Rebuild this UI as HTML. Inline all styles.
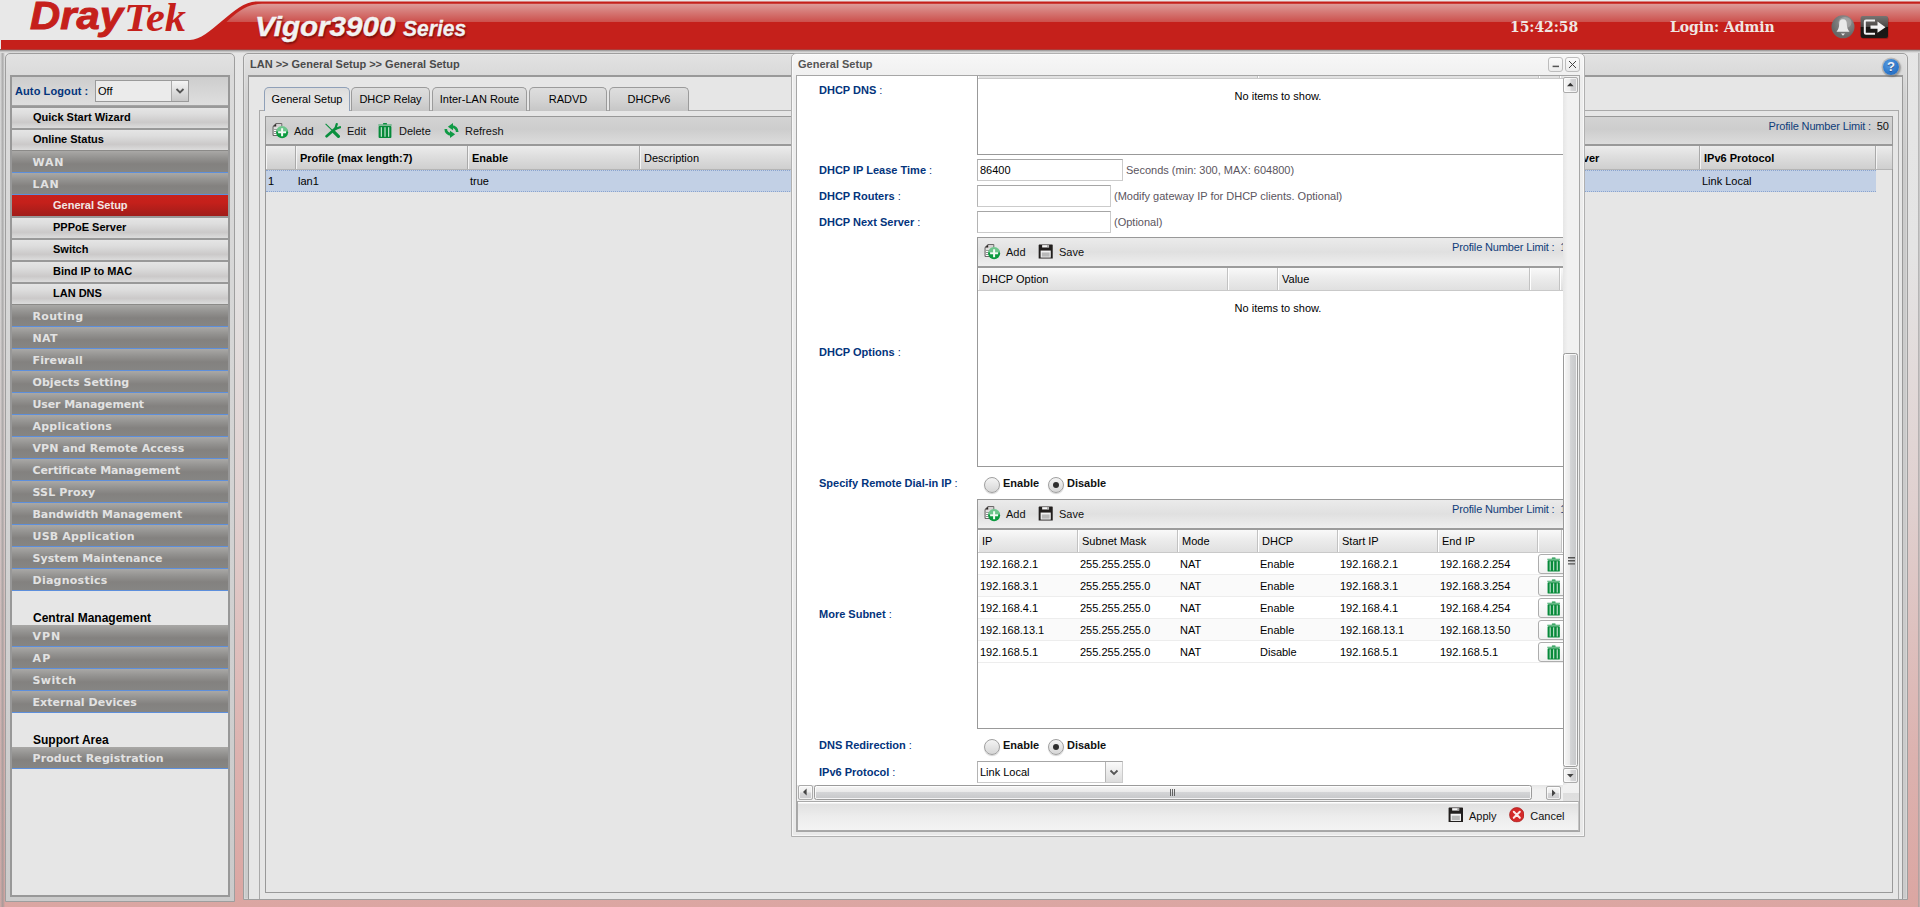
<!DOCTYPE html>
<html>
<head>
<meta charset="utf-8">
<title>Vigor3900 Series</title>
<style>
*{box-sizing:border-box;}
html,body{margin:0;padding:0;}
body{width:1920px;height:907px;overflow:hidden;position:relative;
  font-family:"Liberation Sans",Arial,sans-serif;font-size:11px;color:#000;
  background:linear-gradient(to bottom,#e6e6e6 0px,#e4e4e4 250px,#e0d0cf 507px,#dcb2af 757px,#dba6a2 907px);}
.abs{position:absolute;}
/* ---------- header ---------- */
#hdr{position:absolute;left:0;top:0;width:1920px;height:53px;}
#logo{position:absolute;left:0;top:0;color:#c5201b;white-space:nowrap;}
#logo .d{position:absolute;left:30px;top:-9px;font-family:"Liberation Sans",sans-serif;font-weight:bold;font-style:italic;font-size:39.3px;line-height:48px;
  transform-origin:0 0;transform:scaleX(1.063);-webkit-text-stroke:1px #c5201b;}
#logo .t{position:absolute;left:123.6px;top:-6.5px;font-family:"Liberation Serif",serif;font-style:italic;font-weight:bold;font-size:40px;line-height:48px;
  transform-origin:0 0;transform:scaleX(1.06);}
#model{position:absolute;left:0;top:0;font-family:"Liberation Sans",sans-serif;font-weight:bold;font-style:italic;
  color:#f2f2f2;white-space:nowrap;text-shadow:1px 2px 2px rgba(60,0,0,.55);}
#model .v{position:absolute;left:255px;top:10.2px;font-size:27.7px;line-height:34px;transform-origin:0 0;transform:scaleX(1.07);-webkit-text-stroke:.4px #f2f2f2;}
#model .s{position:absolute;left:403px;top:14.3px;font-size:21.7px;line-height:30px;transform-origin:0 0;transform:scaleX(.97);-webkit-text-stroke:.3px #f2f2f2;}
.hserif{position:absolute;font-family:"DejaVu Serif","Liberation Serif",serif;font-weight:bold;color:#efe6e2;font-size:14px;line-height:20px;white-space:nowrap;letter-spacing:-.08px;}

/* ---------- left panel ---------- */
#lstrip{position:absolute;left:0;top:53px;width:5px;height:854px;background:linear-gradient(to right,rgba(190,190,190,.2),rgba(150,150,150,.75) 55%,rgba(170,170,170,0));}
#rstrip{position:absolute;left:1918px;top:53px;width:2px;height:854px;background:linear-gradient(to right,rgba(150,150,150,.7),rgba(190,190,190,.5));}
#lp{position:absolute;left:5px;top:53px;width:230px;height:849px;border:1px solid #9e9e9e;border-radius:5px 5px 0 0;
  background:linear-gradient(to bottom,#e2e2e2 0,#dadada 22px,#dbdbdb 23px,#cbcbcb 100%);}
#lpin{position:absolute;left:10px;top:75px;width:220px;height:822px;border:2px solid #989898;background:#e6e6e6;overflow:hidden;}
#al{position:absolute;left:0;top:0;width:216px;height:29px;background:linear-gradient(#cdcdcd,#d6d6d6 50%,#dedede);border-bottom:1px solid #a4a4a4;}
#al .lb{position:absolute;left:3px;top:7px;font-weight:bold;color:#03347c;font-size:11px;line-height:14px;letter-spacing:.1px}
#al .sel{position:absolute;left:83px;top:3px;width:94px;height:22px;border:1px solid #9a9a9a;background:#ebebeb;}
#al .sel span{position:absolute;left:2px;top:4px;font-size:11px;line-height:13px;color:#000;}
#al .sel i{position:absolute;right:0;top:0;width:17px;height:20px;border-left:1px solid #aaa;background:linear-gradient(#f4f4f4,#c8c8c8);}
.mi{position:absolute;left:0;width:216px;height:22px;font-weight:bold;font-size:11px;line-height:14px;white-space:nowrap;}
.mi span{position:absolute;top:3px;}
.mw{background:linear-gradient(#e5e5e5 0,#dddddd 30%,#cbc9c9 72%,#dcdcdc 100%);border-top:2px solid #999;color:#000;height:22px;}
.mw span{left:21px;top:2px;}
.ms span{left:41px;}
.mg{background:linear-gradient(#a9a8a6 0,#92918f 35%,#83817f 62%,#868583 100%);border-bottom:1px solid #5d8fdc;color:#e2e2e2;
  font-family:"DejaVu Sans",Verdana,sans-serif;font-size:11px;}
.mg span{left:20.5px;top:5px;}
.mr{background:linear-gradient(#c8211c 0,#c5201b 35%,#a01d1a 100%);color:#f3e6e4;height:21px;}
.mr span{left:41px;top:3px;}
.mh{position:absolute;left:21px;font-weight:bold;font-size:12px;line-height:14px;color:#000;white-space:nowrap;}
/* ---------- right panel ---------- */
#rp{position:absolute;left:243px;top:53px;width:1665px;height:847px;border:1px solid #9e9e9e;border-radius:5px 5px 0 0;
  background:linear-gradient(to bottom,#e2e2e2 0,#d9d9d9 22px,#d2d2d2 40px,#cbcbcb 110px,#cbcbcb 100%);box-shadow:inset 0 0 0 1px rgba(255,255,255,.22);}
#rpt{position:absolute;left:250px;top:57px;font-weight:bold;font-size:11px;line-height:14px;color:#4a4a4a;white-space:nowrap;}
#rpin{position:absolute;left:248px;top:75px;width:1655px;height:824px;border:1px solid #999;border-top:2px solid #999;border-bottom:0;background:#e6e6e6;}
#help{position:absolute;left:1883px;top:59px;width:16px;height:16px;border-radius:8px;
  background:radial-gradient(circle at 40% 35%,#5e9fe0 0,#2f7acd 55%,#1f63b4 100%);box-shadow:0 0 0 1.5px rgba(150,150,150,.45),1px 1px 2px 1px rgba(0,0,0,.3);
  color:#eef4fb;font-weight:bold;font-size:13px;line-height:16px;text-align:center;text-shadow:0 1px 1px rgba(0,0,60,.5);}
.tab{position:absolute;top:87px;height:24px;border:1px solid #9b9b9b;border-bottom:0;border-radius:5px 5px 0 0;
  background:linear-gradient(#dedede 0,#d4d4d4 50%,#c6c6c6 100%);font-size:11px;line-height:14px;text-align:center;color:#000;white-space:nowrap;padding-top:4px;}
.tab.on{background:linear-gradient(#dcdcdc 0,#e3e3e3 40%,#e6e6e6 100%);border-color:#8fa0b8;height:24px;}
#tabline{position:absolute;left:259px;top:110px;width:1640px;height:789px;border:1px solid #a9a9a9;border-bottom:0;background:#e6e6e6;}
#grid{position:absolute;left:265px;top:116px;width:1628px;height:777px;border:1px solid #999;background:#e6e6e6;}
.tb{position:absolute;left:0;top:0;width:100%;height:29px;background:linear-gradient(#d3d3d3 0,#cdcdcd 45%,#dcdcdc 100%);border-bottom:2px solid #999;}
.tbi{position:absolute;top:7px;font-size:11px;line-height:14px;color:#111;white-space:nowrap;}
.pnl{position:absolute;top:3px;font-size:11px;line-height:14px;color:#0f3d7a;white-space:nowrap;}
.gh{position:absolute;left:0;top:29px;width:100%;height:24px;background:linear-gradient(#ececec 0,#dedede 45%,#cfcfcf 100%);border-bottom:1px solid #b5b5b5;}
.ghc{position:absolute;top:0;height:23px;border-left:1px solid #f4f4f4;border-right:1px solid #a9a9a9;font-size:11px;line-height:14px;padding:5px 0 0 4px;white-space:nowrap;overflow:hidden;color:#000;}
.ghc.b{font-weight:bold;}
.grow{position:absolute;left:0;height:22px;font-size:11px;line-height:14px;}
.grow.sel{background:#c2d0e5;border-top:1px dotted #8aa4cf;border-bottom:1px dotted #8aa4cf;}
.gc{position:absolute;top:3px;white-space:nowrap;color:#000;}

/* ---------- dialog ---------- */
#dlgsh{position:absolute;left:791px;top:57px;width:794px;height:780px;box-shadow:0 0 6px 1px rgba(0,0,0,.45);border-radius:5px;}
#dlg{position:absolute;left:791px;top:53px;width:794px;height:784px;border:1px solid #b0b0b0;border-radius:5px 5px 0 0;
  background:linear-gradient(#f7f7f7 0,#f0f0f0 22px,#ededed 23px,#e9e9e9 100%);box-shadow:inset 0 0 0 1px rgba(255,255,255,.6);}
#dlgt{position:absolute;left:798px;top:57px;font-weight:bold;font-size:11px;line-height:14px;color:#555;white-space:nowrap;}
.tool{position:absolute;top:57px;width:15px;height:15px;border:1px solid #bdbdbd;border-radius:3px;background:linear-gradient(#fafafa,#ececec);}
#dbody{position:absolute;left:796px;top:75px;width:784px;height:757px;border:1px solid #a6a6a6;background:#fff;overflow:hidden;}
#dsc{position:absolute;left:0;top:0;width:766px;height:709px;overflow:hidden;background:#fff;}
.fl{position:absolute;left:22px;font-weight:bold;font-size:11px;line-height:14px;color:#03347c;white-space:nowrap;}
.fl b{font-weight:normal}
.inp{position:absolute;left:180px;height:22px;border:1px solid #cbcbcb;border-top-color:#a6a6a6;border-left-color:#b4b4b4;background:#fff;font-size:11px;line-height:14px;padding:3px 0 0 2px;color:#000;}
.hint{position:absolute;font-size:11px;line-height:14px;color:#5b5560;white-space:nowrap;}
.sg{position:absolute;left:180px;width:620px;border:1px solid #999;background:#fff;}
.stb{position:absolute;left:0;top:0;width:100%;height:30px;background:linear-gradient(#ebebeb 0,#e0e0e0 50%,#efefef 100%);border-bottom:2px solid #9c9c9c;}
.sgh{position:absolute;left:0;top:30px;width:100%;height:23px;background:linear-gradient(#f9f9f9 0,#ececec 45%,#e0e0e0 100%);border-bottom:1px solid #c9c9c9;}
.sgh .ghc{height:22px;padding:4px 0 0 3px;border-right-color:#c2c2c2;border-left-color:#fff;}
.noitems{position:absolute;left:0;width:600px;text-align:center;font-size:11px;line-height:14px;color:#000;}
.srow{position:absolute;left:0;width:620px;height:22px;border-bottom:1px solid #ededed;font-size:11px;line-height:14px;}
.srow.alt{background:#fafafa;}
.srow span{position:absolute;top:4px;white-space:nowrap;}
.delb{position:absolute;left:560px;top:1px;width:30px;height:20px;border:1px solid #adadad;border-radius:3px;background:linear-gradient(#fff,#f1f1f1);}
.radio{position:absolute;width:16px;height:16px;border-radius:8px;border:1px solid #a0a0a0;background:linear-gradient(#f4f4f4,#d6d6d6);box-shadow:0 1px 1px rgba(0,0,0,.18);}
.radio.on:after{content:"";position:absolute;left:4px;top:4px;width:6px;height:6px;border-radius:3px;background:#2e2e2e;}
.rlab{position:absolute;font-weight:bold;font-size:11px;line-height:14px;color:#111;white-space:nowrap;}
#vsb{position:absolute;left:766px;top:0;width:16px;height:709px;background:linear-gradient(to right,#e6e6e6,#f1f1f1 30%,#f1f1f1);}
.sbb{position:absolute;width:14.6px;height:15px;border:1px solid #ababab;border-radius:2px;background:linear-gradient(to right,#f7f7f7 0,#ececec 48%,#d6d6d8 52%,#cbcbcd 100%);box-shadow:inset 0 0 0 1px rgba(255,255,255,.7);}
.sbb.h{background:linear-gradient(#f7f7f7 0,#ececec 48%,#d6d6d8 52%,#cbcbcd 100%);width:15px;height:14.4px;}
#vth{position:absolute;left:.2px;top:277px;width:14.6px;height:414px;border:1px solid #9b9b9b;border-radius:2.5px;background:linear-gradient(to right,#f7f7f7 0,#e9e9e9 45%,#d4d5d7 48%,#c6c7c9 100%);box-shadow:inset 0 0 0 1px rgba(255,255,255,.8);}
#hsb{position:absolute;left:0;top:709px;width:782px;height:16px;background:linear-gradient(#f1f1f1 0,#f0f0f0 50%,#dedede 52%,#e0e0e0 100%);}
#hsb .trk{position:absolute;left:0;top:0;width:766px;height:16px;background:linear-gradient(#e6e6e6,#f1f1f1 30%,#f1f1f1);}
#hth{position:absolute;left:17px;top:.3px;width:717.5px;height:14.5px;border:1px solid #9b9b9b;border-radius:2.5px;background:linear-gradient(#f7f7f7 0,#e9e9e9 45%,#d4d5d7 48%,#c6c7c9 100%);box-shadow:inset 0 0 0 1px rgba(255,255,255,.8);}
#dft{position:absolute;left:0;top:725px;width:782px;height:30px;background:linear-gradient(#fff 0,#fff 1px,#e1e1e1 2px,#ececec 50%,#f3f3f3 100%);border:1px solid #a9a9a9;border-right-color:#c4c4c4;}
#dft span{position:absolute;top:7px;font-size:11px;line-height:14px;color:#111;white-space:nowrap;}
</style>
</head>
<body>
<div id="hdr">
<svg class="abs" style="left:0;top:0" width="1920" height="54" viewBox="0 0 1920 54">
  <defs>
    <linearGradient id="gsh" x1="0" y1="0" x2="0" y2="1"><stop offset="0" stop-color="#8f3430"/><stop offset=".3" stop-color="#9d9b9b"/><stop offset="1" stop-color="#d0d0d0" stop-opacity="0"/></linearGradient>
    <linearGradient id="ggl" x1="0" y1="0" x2="0" y2="1"><stop offset="0" stop-color="#dd9b98"/><stop offset="1" stop-color="#cc504c"/></linearGradient>
    <linearGradient id="gbk" x1="0" y1="0" x2="0" y2="1"><stop offset="0" stop-color="#777472"/><stop offset=".5" stop-color="#4a4745"/><stop offset=".51" stop-color="#181614"/><stop offset="1" stop-color="#1c1a18"/></linearGradient>
    <radialGradient id="gbell" cx=".6" cy=".3" r=".6"><stop offset="0" stop-color="#9a9a9a"/><stop offset="1" stop-color="#686868"/></radialGradient>
  </defs>
  <rect x="0" y="0" width="1920" height="50" fill="#e8e8e8"/>
  <rect x="0" y="49" width="1920" height="4.5" fill="url(#gsh)"/>
  <path d="M1 40 L190 40 C210 40 234 1.5 256 1.5 L1920 1.5 L1920 49.5 L1 49.5 Z" fill="#c5201b"/>
  <path d="M226.5 22 C236 13 246 4 262 3.8 L1920 3.8 L1920 22 Z" fill="url(#ggl)"/>
  <circle cx="1843" cy="26.8" r="11.5" fill="url(#gbell)"/>
  <ellipse cx="1845" cy="22.5" rx="6.5" ry="5.5" fill="#b5b5b5" opacity=".55"/><path d="M1843 19.3 c-2.7 0 -3.8 2 -3.8 4.4 c0 3.6 -0.9 5.6 -2.7 8 h13 c-1.8 -2.4 -2.7 -4.4 -2.7 -8 c0 -2.4 -1.1 -4.4 -3.8 -4.4 Z M1841 33.6 h4 l-2 2.2 Z" fill="#e9e9e9"/>
  <rect x="1861.5" y="17" width="27" height="22" rx="2" fill="#7a1410" opacity=".6"/>
  <rect x="1860.6" y="16" width="27.4" height="22" rx="2" fill="url(#gbk)"/>
  <path d="M1875 20.6 H1866 a1.2 1.2 0 0 0 -1.2 1.2 V32.6 a1.2 1.2 0 0 0 1.2 1.2 H1875" fill="none" stroke="#f4f4f4" stroke-width="2"/>
  <path d="M1870.5 25.6 H1877.5 V21.6 L1885.5 27.2 L1877.5 32.8 V28.8 H1870.5 Z" fill="#f4f4f4"/>
</svg>
<div id="logo"><span class="d">Dray</span><span class="t">Tek</span></div>
<div id="model"><span class="v">Vigor3900</span><span class="s">Series</span></div>
<div class="hserif" style="left:1510px;top:17px;">15:42:58</div>
<div class="hserif" style="left:1670px;top:17px;">Login: Admin</div>
</div>
<!--LEFTSTART-->
<div id="lstrip"></div><div id="rstrip"></div>
<div id="lp"></div>
<div id="lpin">
<div id="al"><span class="lb">Auto Logout :</span><div class="sel"><span>Off</span><i><svg width="16" height="19" viewBox="0 0 16 19"><path d="M4.5 8 L8 11.5 L11.5 8" fill="none" stroke="#555" stroke-width="1.8"/></svg></i></div></div>
<div class="mi mw" style="top:29px"><span>Quick Start Wizard</span></div>
<div class="mi mw" style="top:51px"><span>Online Status</span></div>
<div class="mi mg" style="top:73px;height:23px;border-top:1px solid #8b8a88;"><span style="letter-spacing:0.8px">WAN</span></div>
<div class="mi mg" style="top:96px;height:22px;"><span style="letter-spacing:0.8px">LAN</span></div>
<div class="mi mr" style="top:118px"><span>General Setup</span></div>
<div class="mi mw ms" style="top:139px"><span>PPPoE Server</span></div>
<div class="mi mw ms" style="top:161px"><span>Switch</span></div>
<div class="mi mw ms" style="top:183px"><span>Bind IP to MAC</span></div>
<div class="mi mw ms" style="top:205px"><span>LAN DNS</span></div>
<div class="mi mg" style="top:227px;height:23px;border-top:1px solid #8b8a88;"><span style="letter-spacing:0.32px">Routing</span></div>
<div class="mi mg" style="top:250px;height:22px;"><span style="letter-spacing:0.3px">NAT</span></div>
<div class="mi mg" style="top:272px;height:22px;"><span style="letter-spacing:0.13px">Firewall</span></div>
<div class="mi mg" style="top:294px;height:22px;"><span style="letter-spacing:0.05px">Objects Setting</span></div>
<div class="mi mg" style="top:316px;height:22px;"><span style="letter-spacing:-0.11px">User Management</span></div>
<div class="mi mg" style="top:338px;height:22px;"><span style="letter-spacing:0.24px">Applications</span></div>
<div class="mi mg" style="top:360px;height:22px;"><span style="letter-spacing:0.08px">VPN and Remote Access</span></div>
<div class="mi mg" style="top:382px;height:22px;"><span style="letter-spacing:-0.11px">Certificate Management</span></div>
<div class="mi mg" style="top:404px;height:22px;"><span style="letter-spacing:0.15px">SSL Proxy</span></div>
<div class="mi mg" style="top:426px;height:22px;"><span style="letter-spacing:-0.07px">Bandwidth Management</span></div>
<div class="mi mg" style="top:448px;height:22px;"><span style="letter-spacing:0.2px">USB Application</span></div>
<div class="mi mg" style="top:470px;height:22px;"><span style="letter-spacing:0.03px">System Maintenance</span></div>
<div class="mi mg" style="top:492px;height:22px;"><span style="letter-spacing:0.25px">Diagnostics</span></div>
<div class="mh" style="top:534px">Central Management</div>
<div class="mi mg" style="top:548px;height:22px;"><span style="letter-spacing:1.0px">VPN</span></div>
<div class="mi mg" style="top:570px;height:22px;"><span style="letter-spacing:1.3px">AP</span></div>
<div class="mi mg" style="top:592px;height:22px;"><span style="letter-spacing:0.42px">Switch</span></div>
<div class="mi mg" style="top:614px;height:22px;"><span style="letter-spacing:0.05px">External Devices</span></div>
<div class="mh" style="top:656px">Support Area</div>
<div class="mi mg" style="top:670px;height:22px;"><span style="letter-spacing:0.11px">Product Registration</span></div>
</div>
<!--LEFT-->
<div id="rp"></div>
<div id="rpt">LAN &gt;&gt; General Setup &gt;&gt; General Setup</div>
<div id="rpin"></div>
<div id="help">?</div>
<div id="tabline"></div>
<div class="tab on" style="left:264px;width:86px;">General Setup</div>
<div class="tab" style="left:351px;width:79px;">DHCP Relay</div>
<div class="tab" style="left:432px;width:95px;">Inter-LAN Route</div>
<div class="tab" style="left:529px;width:78px;">RADVD</div>
<div class="tab" style="left:609px;width:80px;">DHCPv6</div>
<div id="grid">
 <div class="tb">
  <svg class="abs" style="left:6px;top:6px" width="17" height="17"><use href="#iadd"/></svg><span class="tbi" style="left:28px">Add</span>
  <svg class="abs" style="left:59.4px;top:6.3px" width="16" height="15"><use href="#iedit"/></svg><span class="tbi" style="left:81px">Edit</span>
  <svg class="abs" style="left:111.8px;top:6px" width="14" height="15"><use href="#itrash"/></svg><span class="tbi" style="left:133px">Delete</span>
  <svg class="abs" style="left:176.6px;top:6.4px" width="17" height="15"><use href="#irefresh"/></svg><span class="tbi" style="left:199px">Refresh</span>
  <span class="pnl" style="right:21px;top:2px;letter-spacing:-.15px">Profile Number Limit :</span>
  <span class="pnl" style="right:3px;top:2px;color:#111">50</span>
 </div>
 <div class="gh">
  <div class="ghc" style="left:0;width:30px"></div>
  <div class="ghc b" style="left:30px;width:172px;padding-left:3px">Profile (max length:7)</div>
  <div class="ghc b" style="left:202px;width:172px;padding-left:3px">Enable</div>
  <div class="ghc" style="left:374px;width:174px;padding-left:3px">Description</div>
  <div class="ghc b" style="left:1260px;width:174px">DHCP Server</div>
  <div class="ghc b" style="left:1434px;width:176px;padding-left:3px">IPv6 Protocol</div>
  <div class="ghc" style="left:1610px;width:17px"></div>
 </div>
 <div class="grow sel" style="top:53px;width:1610px;">
  <span class="gc" style="left:2px">1</span>
  <span class="gc" style="left:32px">lan1</span>
  <span class="gc" style="left:204px">true</span>
  <span class="gc" style="left:1436px">Link Local</span>
 </div>
</div>
<!--RIGHT-->
<svg width="0" height="0" style="position:absolute">
<defs>
<symbol id="itrash" viewBox="0 0 14 15"><rect x="5" y="0.1" width="4" height="1.4" rx=".6" fill="#0a8f3e"/><rect x="0.3" y="1.5" width="13.4" height="1" fill="#2fa35c"/><rect x="0.6" y="3" width="12.8" height="11.9" rx=".9" fill="#078a3a"/><path d="M3.3 4.6 V13.4 M7 4.6 V13.4 M10.7 4.6 V13.4" stroke="#e6f5ec" stroke-width="1" stroke-linecap="round"/></symbol>
<symbol id="isave" viewBox="0 0 16 16"><path d="M1.1 0.5 H14.9 L15.5 1.1 V15.5 H0.5 V1.1Z" fill="#221f1e"/><rect x="4.2" y="1.2" width="7.4" height="2.5" fill="#f6f6f6"/><rect x="9.8" y="1.4" width="1.2" height="1.6" fill="#666"/><rect x="2.6" y="7" width="10.8" height="7.5" fill="#f3f3f3"/><rect x="3.8" y="9" width="8.4" height="4.5" fill="#b9b9b9"/></symbol>
<symbol id="iadd" viewBox="0 0 17 17"><path d="M1 3.4 L4 0.5 H9.8 V12.5 H1Z" fill="#d4d2d2" stroke="#6a6868" stroke-width="1"/><path d="M1 3.6 L4.2 0.5 V3.6Z" fill="#2a2624"/><path d="M2 5.2 H6 M2 7.4 H5 M2 9.6 H4.6 M2 11.4 H5" stroke="#fff" stroke-width="1.1"/><path d="M2 6.3 H5 M2 8.5 H4.6 M2 10.5 H4.6" stroke="#777" stroke-width=".8"/><circle cx="10.1" cy="9.2" r="6" fill="#0a9a3e"/><path d="M4.3 8.6 A5.8 5.8 0 0 1 15.9 8.6 Z" fill="#8fd3a5" opacity=".75"/><path d="M10.1 5.2 V13.2 M6.1 9.2 H14.1" stroke="#f1faf3" stroke-width="2"/></symbol>
<symbol id="icancel" viewBox="0 0 17 17"><circle cx="8.5" cy="8.5" r="7.9" fill="#d42a2a" stroke="#a81d1d" stroke-width=".8"/><path d="M5.2 5.2 L11.8 11.8 M11.8 5.2 L5.2 11.8" stroke="#fbeaea" stroke-width="2.2" stroke-linecap="round"/></symbol>
<symbol id="iedit" viewBox="0 0 16 15"><path d="M1.6 13.2 L10.4 5.6" stroke="#0a8f3e" stroke-width="2.7" stroke-linecap="round"/><path d="M10.3 6 L11.7 1.2 M10.3 6 L15 4.2" stroke="#0a8f3e" stroke-width="2.3" stroke-linecap="round"/><path d="M0.6 0.8 L7 7.2" stroke="#0a8f3e" stroke-width="1.1"/><path d="M8.6 8.6 L13.4 13.4" stroke="#0a8f3e" stroke-width="3.2" stroke-linecap="round"/></symbol>
<symbol id="irefresh" viewBox="0 0 16 14"><path d="M13.4 8.4 A4.9 4.9 0 0 0 8.4 3.4" fill="none" stroke="#109a45" stroke-width="2.5"/><path d="M9.4 0 V6.8 L4.6 3.4 Z" fill="#109a45"/><path d="M2.6 5.6 A4.9 4.9 0 0 0 7.6 10.6" fill="none" stroke="#109a45" stroke-width="2.5"/><path d="M6.6 7.2 V14 L11.4 10.6 Z" fill="#109a45"/></symbol>
</defs></svg>
<div id="dlg"></div>
<div id="dlgt">General Setup</div>
<div class="tool" style="left:1548px"><svg width="13" height="13"><path d="M3.6 8.4 H10" stroke="#555" stroke-width="1.5"/></svg></div>
<div class="tool" style="left:1565px"><svg width="13" height="13"><path d="M3 3 L10 10 M10 3 L3 10" stroke="#444" stroke-width="1"/></svg></div>
<div id="dbody">
<div id="dsc">
 <div class="fl" style="top:7px">DHCP DNS <b>:</b></div>
 <div class="sg" style="top:-51px;height:130px;"><div class="sgh" style="top:30px"><div class="ghc" style="left:0;width:280px"></div><div class="ghc" style="left:280px;width:281px"></div><div class="ghc" style="left:561px;width:21px"></div><div class="ghc" style="left:582px;width:40px"></div></div>
   <div class="noitems" style="top:63px">No items to show.</div></div>
 <div class="fl" style="top:87px">DHCP IP Lease Time <b>:</b></div>
 <div class="inp" style="top:83px;width:146px">86400</div>
 <div class="hint" style="left:329px;top:87px">Seconds (min: 300, MAX: 604800)</div>
 <div class="fl" style="top:113px">DHCP Routers <b>:</b></div>
 <div class="inp" style="top:109px;width:134px"></div>
 <div class="hint" style="left:317px;top:113px">(Modify gateway IP for DHCP clients. Optional)</div>
 <div class="fl" style="top:139px">DHCP Next Server <b>:</b></div>
 <div class="inp" style="top:135px;width:134px"></div>
 <div class="hint" style="left:317px;top:139px">(Optional)</div>
 <div class="sg" style="top:161px;height:230px;">
  <div class="stb"><svg class="abs" style="left:6px;top:6px" width="17" height="17"><use href="#iadd"/></svg><span class="tbi" style="left:28px;top:7px">Add</span>
   <svg class="abs" style="left:59.8px;top:6.2px" width="15.4" height="15"><use href="#isave"/></svg><span class="tbi" style="left:81px;top:7px">Save</span>
   <span class="pnl" style="left:474px;top:2px;letter-spacing:-.15px">Profile Number Limit :&nbsp; 10</span></div>
  <div class="sgh"><div class="ghc" style="left:0;width:250px">DHCP Option</div><div class="ghc" style="left:250px;width:50px"></div><div class="ghc" style="left:300px;width:252px">Value</div><div class="ghc" style="left:552px;width:30px"></div><div class="ghc" style="left:582px;width:40px"></div></div>
  <div class="noitems" style="top:63px">No items to show.</div>
 </div>
 <div class="fl" style="top:269px">DHCP Options <b>:</b></div>
 <div class="fl" style="top:400px">Specify Remote Dial-in IP <b>:</b></div>
 <div class="radio" style="left:187px;top:401px"></div><div class="rlab" style="left:206px;top:400px">Enable</div>
 <div class="radio on" style="left:251px;top:401px"></div><div class="rlab" style="left:270px;top:400px">Disable</div>
 <div class="sg" style="top:423px;height:230px;">
  <div class="stb"><svg class="abs" style="left:6px;top:6px" width="17" height="17"><use href="#iadd"/></svg><span class="tbi" style="left:28px;top:7px">Add</span>
   <svg class="abs" style="left:59.8px;top:6.2px" width="15.4" height="15"><use href="#isave"/></svg><span class="tbi" style="left:81px;top:7px">Save</span>
   <span class="pnl" style="left:474px;top:2px;letter-spacing:-.15px">Profile Number Limit :&nbsp; 10</span></div>
  <div class="sgh"><div class="ghc" style="left:0;width:100px">IP</div><div class="ghc" style="left:100px;width:100px">Subnet Mask</div><div class="ghc" style="left:200px;width:80px">Mode</div><div class="ghc" style="left:280px;width:80px">DHCP</div><div class="ghc" style="left:360px;width:100px">Start IP</div><div class="ghc" style="left:460px;width:100px">End IP</div><div class="ghc" style="left:560px;width:24px"></div><div class="ghc" style="left:584px;width:40px"></div></div>
<div class="srow" style="top:53px"><span style="left:2px">192.168.2.1</span><span style="left:102px">255.255.255.0</span><span style="left:202px">NAT</span><span style="left:282px">Enable</span><span style="left:362px">192.168.2.1</span><span style="left:462px">192.168.2.254</span><div class="delb"><svg class="abs" style="left:7.6px;top:2.2px" width="13.4" height="15"><use href="#itrash"/></svg></div></div>
<div class="srow alt" style="top:75px"><span style="left:2px">192.168.3.1</span><span style="left:102px">255.255.255.0</span><span style="left:202px">NAT</span><span style="left:282px">Enable</span><span style="left:362px">192.168.3.1</span><span style="left:462px">192.168.3.254</span><div class="delb"><svg class="abs" style="left:7.6px;top:2.2px" width="13.4" height="15"><use href="#itrash"/></svg></div></div>
<div class="srow" style="top:97px"><span style="left:2px">192.168.4.1</span><span style="left:102px">255.255.255.0</span><span style="left:202px">NAT</span><span style="left:282px">Enable</span><span style="left:362px">192.168.4.1</span><span style="left:462px">192.168.4.254</span><div class="delb"><svg class="abs" style="left:7.6px;top:2.2px" width="13.4" height="15"><use href="#itrash"/></svg></div></div>
<div class="srow alt" style="top:119px"><span style="left:2px">192.168.13.1</span><span style="left:102px">255.255.255.0</span><span style="left:202px">NAT</span><span style="left:282px">Enable</span><span style="left:362px">192.168.13.1</span><span style="left:462px">192.168.13.50</span><div class="delb"><svg class="abs" style="left:7.6px;top:2.2px" width="13.4" height="15"><use href="#itrash"/></svg></div></div>
<div class="srow" style="top:141px"><span style="left:2px">192.168.5.1</span><span style="left:102px">255.255.255.0</span><span style="left:202px">NAT</span><span style="left:282px">Disable</span><span style="left:362px">192.168.5.1</span><span style="left:462px">192.168.5.1</span><div class="delb"><svg class="abs" style="left:7.6px;top:2.2px" width="13.4" height="15"><use href="#itrash"/></svg></div></div>

 </div>
 <div class="fl" style="top:531px">More Subnet <b>:</b></div>
 <div class="fl" style="top:662px">DNS Redirection <b>:</b></div>
 <div class="radio" style="left:187px;top:663px"></div><div class="rlab" style="left:206px;top:662px">Enable</div>
 <div class="radio on" style="left:251px;top:663px"></div><div class="rlab" style="left:270px;top:662px">Disable</div>
 <div class="fl" style="top:689px">IPv6 Protocol <b>:</b></div>
 <div class="inp" style="top:685px;width:146px">Link Local<i class="abs" style="right:0;top:0;width:17px;height:20px;border-left:1px solid #b5b5b5;background:linear-gradient(#fafafa,#dcdcdc)"><svg width="16" height="20" viewBox="0 0 16 20"><path d="M4.5 8.5 L8 12 L11.5 8.5" fill="none" stroke="#555" stroke-width="1.8"/></svg></i></div>
</div>
<div id="vsb"><div class="sbb" style="left:.2px;top:1.2px;height:15.6px"><svg width="13" height="13"><path d="M3 8.2 L6.3 4.8 L9.6 8.2 Z" fill="#333"/></svg></div><div id="vth"><svg class="abs" style="left:2.6px;top:202px" width="9" height="10"><path d="M1 1.7 H8 M1 4.8 H8 M1 7.9 H8" stroke="#555" stroke-width="1.4"/></svg></div>
 <div class="sbb" style="left:.2px;top:691.8px"><svg width="13" height="13"><path d="M3 5 L9.6 5 L6.3 8.4 Z" fill="#444"/></svg></div></div>
<div id="hsb"><div class="trk"></div><div class="sbb h" style="left:1.4px;top:.3px"><svg width="13" height="13"><path d="M7.6 2.6 L7.6 9.6 L4 6.1 Z" fill="#444"/></svg></div><div id="hth"><svg class="abs" style="left:353px;top:2px" width="9" height="9"><path d="M2.5 1 V8 M4.5 1 V8 M6.5 1 V8" stroke="#555" stroke-width=".9"/></svg></div>
 <div class="sbb h" style="left:749.3px;top:.6px"><svg width="13" height="13"><path d="M5 2.6 L5 9.6 L8.6 6.1 Z" fill="#444"/></svg></div></div>
<div id="dft"><svg class="abs" style="left:649.6px;top:5px" width="15.6" height="15.4"><use href="#isave"/></svg><span style="left:671px">Apply</span>
 <svg class="abs" style="left:710.6px;top:5px" width="15.6" height="15.6"><use href="#icancel"/></svg><span style="left:732.3px">Cancel</span></div>
</div>
<!--DIALOG-->
</body>
</html>
